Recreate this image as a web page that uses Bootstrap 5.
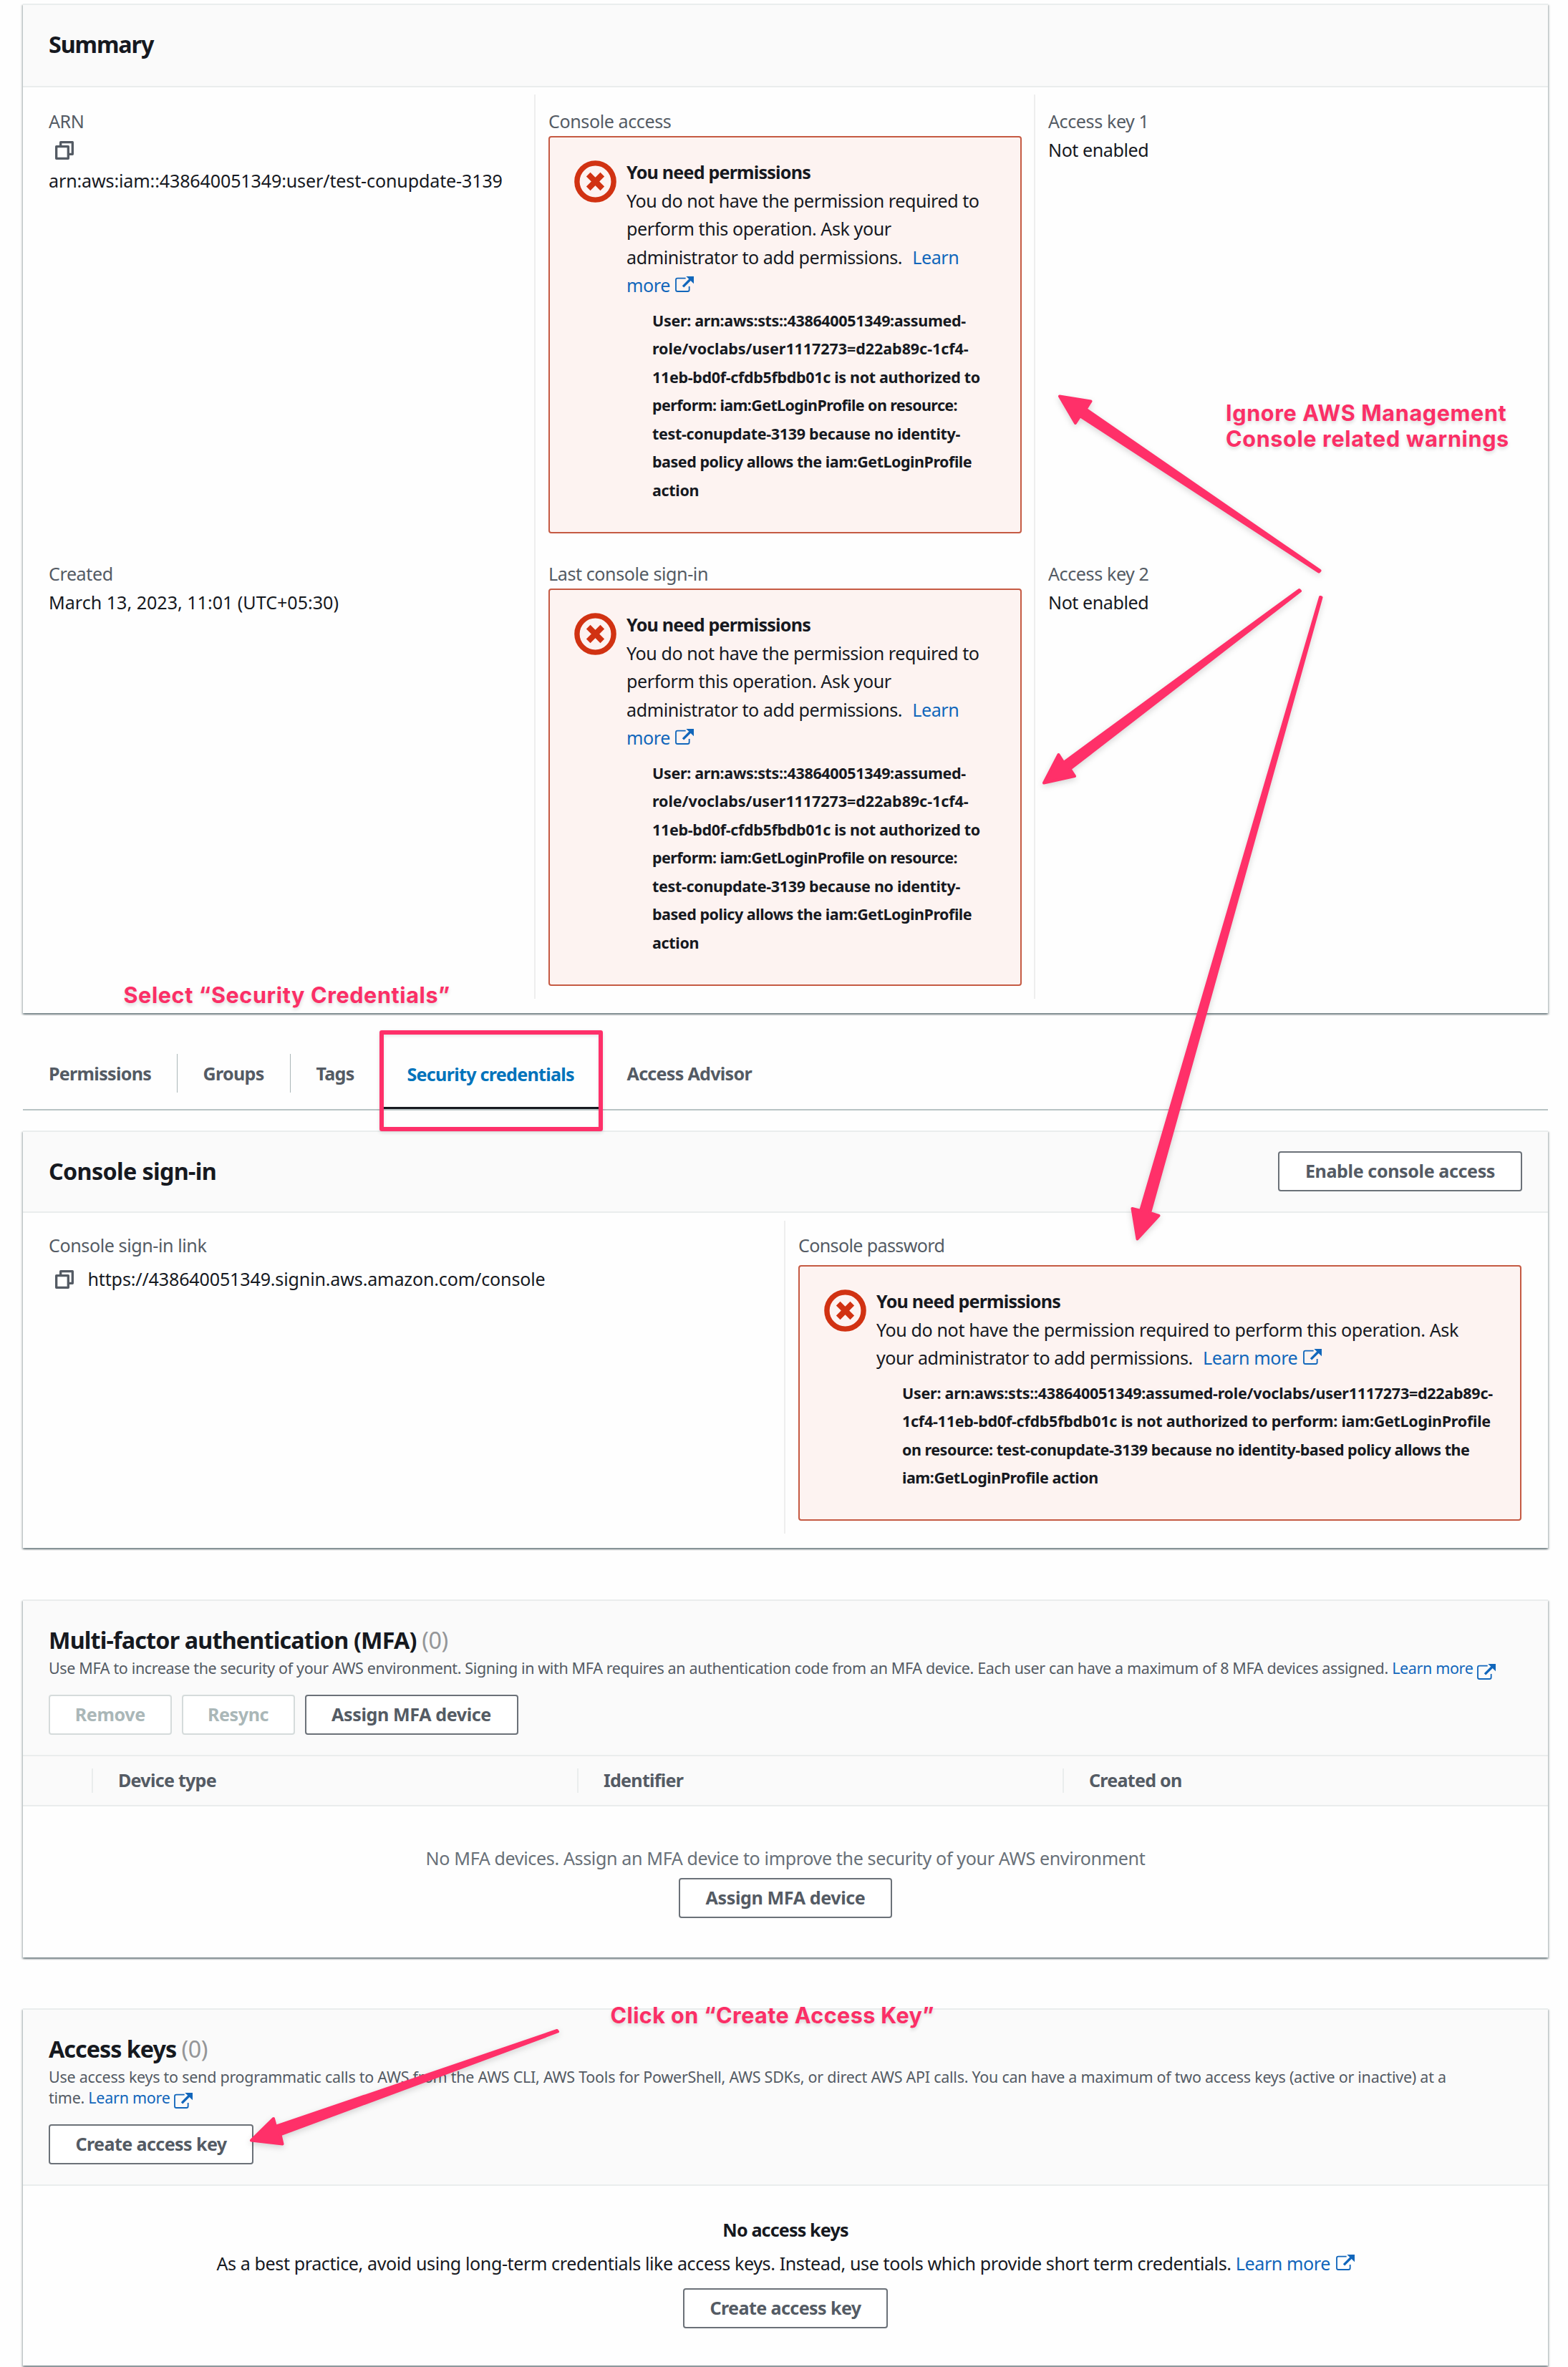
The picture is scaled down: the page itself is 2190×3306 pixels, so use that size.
<!DOCTYPE html>
<html lang="en">
<head>
<meta charset="utf-8">
<title>IAM user</title>
<link href="https://cdn.jsdelivr.net/npm/bootstrap@5.3.0/dist/css/bootstrap.min.css" rel="stylesheet">
<style>
body{width:2190px;height:3306px;overflow:hidden;background:#fefefe;font-family:"Noto Sans","Open Sans",sans-serif;font-size:25.1px;line-height:39.5px;letter-spacing:-.44px;color:#16191f}
.page-wrap{padding:5px 28px 0 32px}
.panel{border-radius:0;border:0;border-top:2px solid #eaeded;background:#fefefe;box-shadow:0 2px 2px rgba(0,28,36,.36),2px 2px 2px rgba(0,28,36,.16),-2px 2px 2px rgba(0,28,36,.16)}
.panel-head{background:#fafafa;border-bottom:2px solid #eaeded;padding:34.5px 36px 0}
.panel h2{font-size:32.3px;line-height:39.5px;font-weight:700;letter-spacing:-.83px;margin:0}
.panel h2 span{font-weight:400;color:#949698;letter-spacing:-.4px}
.cols{padding:10.5px 18px 0}
.cols>div{padding:18px 17px 18px 18px;flex:1 1 0;min-width:0;border-right:2px solid #eee}
.cols>div:last-child{border-right-color:transparent}
.lbl{color:#545b64;letter-spacing:-.42px}
.first-row{height:632px}
.denied{border:2px solid #c55a43;border-radius:4px;background:#fdf3f1;padding:29.5px 0 38.9px 34px;display:flex}
.denied .stop{width:59px;height:59px;margin:3px 14px 0 0;flex:none}
.denied .ttl{font-weight:700;letter-spacing:-.8px}
.denied .det{font-weight:700;font-size:21.5px;letter-spacing:-.33px;padding-left:36px;margin-top:9px;white-space:nowrap}
.det .wider{letter-spacing:-.06px}.det .tight{letter-spacing:-.62px}.det .snug{letter-spacing:-.48px}
.lnk{color:#1166bb;text-decoration:none;white-space:nowrap}
.ext{width:26px;height:22px;margin-left:7.5px;vertical-align:0;overflow:visible}
.sm-desc{font-size:21.5px;line-height:28.7px;color:#545b64;letter-spacing:-.26px;white-space:nowrap}
.sm-desc .ext{vertical-align:-7.5px;margin-left:5.5px;margin-top:-8px}
.cpy{width:26px;height:26px;display:block}
.btn-aws{--bs-btn-color:#545b64;--bs-btn-border-color:#6b7178;--bs-btn-bg:#fff;--bs-btn-border-width:2px;--bs-btn-border-radius:4px;--bs-btn-padding-x:35px;--bs-btn-padding-y:0;--bs-btn-font-size:25.1px;--bs-btn-font-weight:700;--bs-btn-line-height:51.5px;--bs-btn-disabled-color:#aab7b8;--bs-btn-disabled-bg:#fff;--bs-btn-disabled-border-color:#d5dbdb;--bs-btn-disabled-opacity:1;letter-spacing:-.4px;white-space:nowrap;height:56px;padding-left:0;padding-right:0;flex:none}
.w-enable{width:341px}.w-rem{width:171.5px}.w-res{width:158px}.w-mfa{width:298px}.w-key{width:286px;letter-spacing:-.6px}
.aws-tabs{border-bottom:2px solid #b8c3c4;height:100.5px;margin-top:35px;margin-bottom:28.5px;flex-wrap:nowrap}
.aws-tabs .nav-link{color:#545b64;font-weight:700;letter-spacing:-.72px;padding:0;height:98.5px;display:flex;align-items:center}
.aws-tabs .nav-link span{height:54px;line-height:54px;padding-left:36px;border-right:1.5px solid #aab7b8;display:block;width:100%}
.aws-tabs .nav-link.active{color:#0073bb;border-bottom:3.5px solid #16191f}
.aws-tabs .nav-link.active span{margin-top:3.5px}
.aws-tabs .active span,.aws-tabs .lastone span{border-color:transparent}
.t1{width:215.5px}.t2{width:158px}.t3{width:127px}.t4{width:307px}.t5{width:300px}
.th-row{background:#fafafa;border-bottom:2px solid #eaeded;height:70px}
.th-row>div{height:34px;line-height:32px;border-right:2px solid #eaeded;font-weight:700;color:#545b64;letter-spacing:-.75px;padding-left:35px;flex:1 1 0}
.th-row>div.sel{flex:0 0 98px}
.th-row>div:last-child{border:0}
.empty-note{color:#687078;letter-spacing:-.38px}
.overlay{position:absolute;left:0;top:0;pointer-events:none}
.pin{position:absolute;font-family:Inter,sans-serif;font-weight:700;font-size:30.6px;line-height:36px;color:#fb2f66;white-space:nowrap;text-shadow:0 3px 5px rgba(0,0,0,.14)}
.pin-a{left:1712px;top:559px;letter-spacing:.62px}.pin-b{left:172.5px;top:1371.5px;letter-spacing:.58px}.pin-c{left:852.5px;top:2796.5px;letter-spacing:.38px}
.ringbox{position:absolute;left:529.5px;top:1438.5px;width:312.5px;height:141px;border:6px solid #fe3069;border-radius:3px;box-shadow:0 2px 5px rgba(0,0,0,.12),inset 0 2px 4px rgba(0,0,0,.1)}
</style>
<script src="https://cdn.jsdelivr.net/npm/bootstrap@5.3.0/dist/js/bootstrap.bundle.min.js"></script>
</head>
<body class="position-relative">
<svg width="0" height="0" class="position-absolute">
<symbol id="i-ext" viewBox="0 0 78 66"><path d="M44 8H10Q3 8 3 15V56Q3 63 10 63H52Q59 63 59 56V42" fill="none" stroke="currentColor" stroke-width="5.5"/><path d="M33 43L64 12" stroke="currentColor" stroke-width="10"/><path d="M46 0H78V31Z" fill="currentColor"/></symbol>
<symbol id="i-copy" viewBox="0 0 78 78"><g fill="#fefefe" stroke="#545b64" stroke-width="10" stroke-linejoin="round"><rect x="23" y="5" width="50" height="50"/><rect x="5" y="23" width="50" height="50"/></g></symbol>
<symbol id="i-stop" viewBox="0 0 59 59"><circle cx="29.5" cy="29.5" r="25.6" fill="none" stroke="#d13212" stroke-width="7.4"/><path d="M19.7 19.7l19.6 19.6M39.3 19.7L19.7 39.3" stroke="#d13212" stroke-width="8"/></symbol>
</svg>

<main class="page-wrap">
<section class="card panel" style="height:1410px">
  <div class="panel-head" style="height:114.5px"><h2 style="letter-spacing:-1.1px">Summary</h2></div>
  <div class="cols d-flex">
    <div>
      <div class="first-row"><div class="lbl">ARN</div><div style="height:43px;padding:7px 0 0 8.5px"><svg class="cpy"><use href="#i-copy"/></svg></div><div style="letter-spacing:-.15px">arn:aws:iam::438640051349:user/test-conupdate-3139</div></div>
      <div class="lbl">Created</div><div style="letter-spacing:-.01px">March 13, 2023, 11:01 (UTC+05:30)</div>
    </div>
    <div>
      <div class="first-row"><div class="lbl">Console access</div>
        <div class="denied"><svg class="stop"><use href="#i-stop"/></svg><div><div class="ttl">You need permissions</div><div>You do not have the permission required to<br>perform this operation. Ask your<br>administrator to add permissions. <a class="lnk ms-2">Learn<br>more<svg class="ext"><use href="#i-ext"/></svg></a></div><div class="det">User: arn:aws:sts::438640051349:assumed-<br><span class="wider">role/voclabs/user1117273=d22ab89c-1cf4-</span><br>11eb-bd0f-cfdb5fbdb01c is not authorized to<br><span class="tight">perform: iam:GetLoginProfile on resource:</span><br>test-conupdate-3139 because no identity-<br><span class="snug">based policy allows the iam:GetLoginProfile</span><br>action</div></div></div>
      </div>
      <div class="lbl">Last console sign-in</div>
      <div class="denied"><svg class="stop"><use href="#i-stop"/></svg><div><div class="ttl">You need permissions</div><div>You do not have the permission required to<br>perform this operation. Ask your<br>administrator to add permissions. <a class="lnk ms-2">Learn<br>more<svg class="ext"><use href="#i-ext"/></svg></a></div><div class="det">User: arn:aws:sts::438640051349:assumed-<br><span class="wider">role/voclabs/user1117273=d22ab89c-1cf4-</span><br>11eb-bd0f-cfdb5fbdb01c is not authorized to<br><span class="tight">perform: iam:GetLoginProfile on resource:</span><br>test-conupdate-3139 because no identity-<br><span class="snug">based policy allows the iam:GetLoginProfile</span><br>action</div></div></div>
    </div>
    <div>
      <div class="first-row"><div class="lbl">Access key 1</div><div>Not enabled</div></div>
      <div class="lbl">Access key 2</div><div>Not enabled</div>
    </div>
  </div>
</section>

<ul class="nav aws-tabs">
  <li class="nav-item t1"><a class="nav-link"><span>Permissions</span></a></li>
  <li class="nav-item t2"><a class="nav-link"><span>Groups</span></a></li>
  <li class="nav-item t3"><a class="nav-link"><span>Tags</span></a></li>
  <li class="nav-item t4"><a class="nav-link active"><span>Security credentials</span></a></li>
  <li class="nav-item t5"><a class="nav-link lastone"><span>Access Advisor</span></a></li>
</ul>

<section class="card panel" style="height:583px">
  <div class="panel-head d-flex justify-content-between align-items-start" style="height:113px"><h2 style="letter-spacing:-.65px">Console sign-in</h2><button class="btn btn-aws w-enable" style="margin-top:-7.5px">Enable console access</button></div>
  <div class="cols d-flex">
    <div style="padding-top:15.5px"><div class="lbl">Console sign-in link</div><div class="d-flex" style="padding-top:7px"><svg class="cpy" style="margin:7px 20px 0 8.5px"><use href="#i-copy"/></svg><div style="letter-spacing:-.17px">https://438640051349.signin.aws.amazon.com/console</div></div></div>
    <div style="padding-top:15.5px"><div class="lbl" style="margin-bottom:7px;letter-spacing:-.65px">Console password</div>
      <div class="denied"><svg class="stop"><use href="#i-stop"/></svg><div><div class="ttl">You need permissions</div><div style="letter-spacing:-.4px">You do not have the permission required to perform this operation. Ask<br><span style="letter-spacing:-.48px">your administrator to add permissions.</span> <a class="lnk ms-2">Learn more<svg class="ext"><use href="#i-ext"/></svg></a></div><div class="det" style="letter-spacing:-.26px">User: arn:aws:sts::438640051349:assumed-role/voclabs/user1117273=d22ab89c-<br>1cf4-11eb-bd0f-cfdb5fbdb01c is not authorized to perform: iam:GetLoginProfile<br><span class="snug">on resource: test-conupdate-3139 because no identity-based policy allows the</span><br><span class="snug">iam:GetLoginProfile action</span></div></div></div>
    </div>
  </div>
</section>

<section class="card panel" style="height:500px;margin-top:72px">
  <div class="panel-head" style="height:216.5px"><h2>Multi-factor authentication (MFA) <span>(0)</span></h2>
    <div class="sm-desc" style="margin-top:6px;letter-spacing:-.36px">Use MFA to increase the security of your AWS environment. Signing in with MFA requires an authentication code from an MFA device. Each user can have a maximum of 8 MFA devices assigned. <a class="lnk">Learn more<svg class="ext"><use href="#i-ext"/></svg></a></div>
    <div class="d-flex" style="gap:14px;margin-top:21.5px"><button class="btn btn-aws w-rem" disabled>Remove</button><button class="btn btn-aws w-res" disabled>Resync</button><button class="btn btn-aws w-mfa">Assign MFA device</button></div></div>
  <div class="th-row d-flex align-items-center"><div class="sel"></div><div>Device type</div><div>Identifier</div><div>Created on</div></div>
  <div class="text-center" style="padding-top:53px"><div class="empty-note">No MFA devices. Assign an MFA device to improve the security of your AWS environment</div><button class="btn btn-aws w-mfa" style="margin-top:8px">Assign MFA device</button></div>
</section>

<section class="card panel" style="height:498.5px;margin-top:71px">
  <div class="panel-head" style="height:245.5px"><h2 style="letter-spacing:-1px">Access keys <span>(0)</span></h2>
    <div class="sm-desc" style="margin-top:6px">Use access keys to send programmatic calls to AWS from the AWS CLI, AWS Tools for PowerShell, AWS SDKs, or direct AWS API calls. You can have a maximum of two access keys (active or inactive) at a<br>time. <a class="lnk">Learn more<svg class="ext"><use href="#i-ext"/></svg></a></div>
    <button class="btn btn-aws w-key d-block" style="margin-top:21.5px">Create access key</button></div>
  <div class="text-center" style="padding-top:42px"><div class="fw-bold" style="letter-spacing:-.85px">No access keys</div><div style="margin-top:8px;letter-spacing:-.41px">As a best practice, avoid using long-term credentials like access keys. Instead, use tools which provide short term credentials. <a class="lnk">Learn more<svg class="ext"><use href="#i-ext"/></svg></a></div><button class="btn btn-aws w-key" style="margin-top:14px">Create access key</button></div>
</section>
</main>

<!-- annotations that float over the console -->
<svg class="overlay" width="2190" height="3306" style="filter:drop-shadow(0 3px 4px rgba(0,0,0,.16))"><g fill="#ff3069" stroke="#ff3069" stroke-width="4" stroke-linejoin="round">
<path d="M1480 553.5L1523.5 560.5 1516.5 571.5 1843.5 797 1842 798.5 1508.5 581 1502 591Z"/>
<path d="M1458 1093.5L1478.5 1054 1485.5 1065 1814.5 824 1816 825.5 1494.5 1074 1501 1084Z"/>
<path d="M1588.5 1730.5L1581.5 1688 1593 1691 1844 834 1845.5 834.5 1606 1694 1618.5 1698Z"/>
<path d="M351 2989.5L382 2959 385 2970 778 2836 779 2837.5 391.5 2981.5 394.5 2994.5Z"/></g></svg>
<div class="pin pin-a">Ignore AWS Management<br>Console related warnings</div>
<div class="pin pin-b">Select “Security Credentials”</div>
<div class="pin pin-c">Click on “Create Access Key”</div>
<div class="ringbox"></div>
</body>
</html>
